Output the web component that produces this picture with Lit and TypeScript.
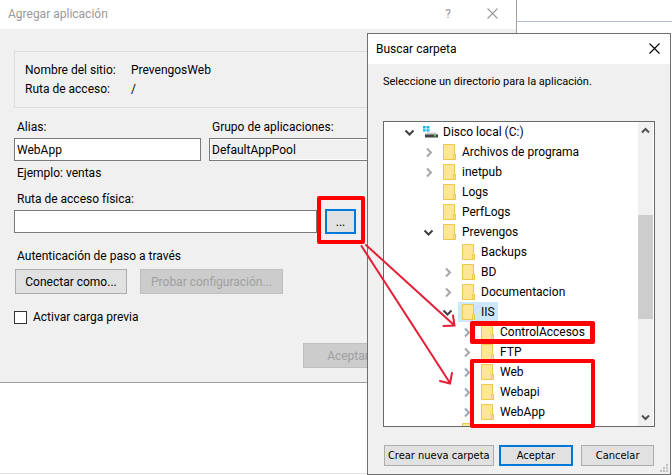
import { LitElement, html, css, svg, nothing } from "lit";
import { customElement, property } from "lit/decorators.js";

interface Node {
  name: string;
  level: number;
  state?: "open" | "closed";
  drive?: boolean;
  selected?: boolean;
}

const before: Node[] = [
  { name: "Disco local (C:)", level: 0, state: "open", drive: true },
  { name: "Archivos de programa", level: 1, state: "closed" },
  { name: "inetpub", level: 1, state: "closed" },
  { name: "Logs", level: 1 },
  { name: "PerfLogs", level: 1 },
  { name: "Prevengos", level: 1, state: "open" },
  { name: "Backups", level: 2 },
  { name: "BD", level: 2, state: "closed" },
  { name: "Documentacion", level: 2, state: "closed" },
  { name: "IIS", level: 2, state: "open", selected: true },
];
const access: Node[] = [{ name: "ControlAccesos", level: 3, state: "closed" }];
const ftp: Node[] = [{ name: "FTP", level: 3, state: "closed" }];
const webs: Node[] = [
  { name: "Web", level: 3, state: "closed" },
  { name: "Webapi", level: 3, state: "closed" },
  { name: "WebApp", level: 3, state: "closed" },
];

const folder = html`<svg class="icon" width="15" height="18" viewBox="0 0 15 18" aria-hidden="true">
  <path d="M1.5 1.5h11v10h1v5h-12z" fill="#ffe694" stroke="#eec84b" />
  <path d="M11.5 16.5v-5h2v5z" fill="#ffe694" stroke="#eec84b" />
</svg>`;

const drive = html`<svg class="icon" width="15" height="18" viewBox="0 0 15 18" aria-hidden="true">
  <path d="M0 3h2.700v2.500H0zM3.500 3h3v2.500h-3zM0 6.200h2.700v2.300H0zM3.500 6.200h3v2.300h-3z" fill="#1db2ea" />
  <path d="M3 9.500h10l2 3H1.500z" fill="#cfcfcf" />
  <path d="M2 11.500h13v3H2z" fill="#424242" />
  <path d="M11 12h2v1.500h-2z" fill="#3fdc4a" />
</svg>`;

const cross = html`<svg width="11" height="11" viewBox="0 0 11 11" aria-hidden="true">
  <path d="M.5 .5l10 10M10.500 .5l-10 10" fill="none" stroke="currentColor" stroke-width="1.1" />
</svg>`;

@customElement("folder-row")
export class FolderRow extends LitElement {
  @property({ attribute: false }) node!: Node;

  static styles = css`
    :host { display: block; }
    .row { display: flex; align-items: center; gap: 3px; height: 20px; }
    .twisty {
      flex: none; width: 15px; height: 20px; padding: 0; border: 0;
      background: none; display: flex; align-items: center; justify-content: center;
    }
    .cell { display: flex; align-items: center; height: 20px; padding: 0 3px; white-space: nowrap; }
    .selected { background: #cce8ff; }
    .icon { flex: none; margin-right: 5px; }
  `;

  render() {
    const n = this.node;
    const open = n.state === "open";
    return html`<div class="row" role="treeitem" aria-level=${n.level + 1} style="padding-left:${18 + n.level * 19}px">
      <button class="twisty" aria-label=${n.state ? n.name : nothing} ?disabled=${!n.state} tabindex="-1">
        ${n.state
          ? html`<svg width="11" height="11" viewBox="0 0 11 11" aria-hidden="true">
              ${open
                ? svg`<path d="M1.500 3.500l4 4 4-4" fill="none" stroke="#404040" stroke-width="2"/>`
                : svg`<path d="M4 1.500l4 4-4 4" fill="none" stroke="#a6a6a6" stroke-width="2"/>`}
            </svg>`
          : nothing}
      </button>
      <span class="cell ${n.selected ? "selected" : ""}">${n.drive ? drive : folder}${n.name}</span>
    </div>`;
  }
}

@customElement("app-root")
export class AppRoot extends LitElement {
  static styles = css`
    :host {
      display: block; position: relative; min-height: 475px; background: #fff; overflow: hidden;
      color: #000; font: 12px/20px Roboto, "Open Sans", sans-serif;
      --red: #ff0000;
    }
    *, *::after { box-sizing: border-box; }
    button, input { font: inherit; color: inherit; margin: 0; }

    .rule-top { height: 22px; border-bottom: 1px solid #aab9da; }
    .rule-bottom { position: absolute; left: 0; right: 0; bottom: 1px; border-bottom: 1px solid #e0e0e0; }

    .window { position: absolute; background: #f0f0f0; }
    .bar { display: flex; align-items: center; background: #fff; }
    .bar h1 { flex: 1; margin: 0; font: inherit; }
    .tool { border: 0; padding: 0; background: none; display: flex; align-items: center; justify-content: center; }

    .add { left: 0; right: 155px; top: 0; border: solid #a0a0a0; border-width: 0 1px 1px 0; }
    .add .bar { height: 29px; padding: 0 18px 2px 8px; color: #999; gap: 36px; }
    .add .content { padding: 22px 14px 14px; }

    .site {
      margin: 0 0 9px; padding: 9px 10px 8px; border: 1px solid #dcdcdc;
      display: grid; grid-template-columns: 106px 1fr; line-height: 19px;
    }
    .site dt, .site dd { margin: 0; }
    .fields { display: grid; grid-template-columns: 187px 1fr; column-gap: 8px; }
    .label { display: block; padding-left: 3px; }
    .field { display: block; width: 100%; height: 23px; padding: 0 2px; border: 1px solid #7a7a7a; background: #fff; border-radius: 0; outline: 0; }
    .fields .field { margin-top: 1px; }
    .locked { background: #f0f0f0; box-shadow: inset 0 0 0 1px #fff; }
    .hint { margin: 2px 0 6px; padding-left: 3px; }
    .path { display: flex; align-items: center; gap: 8px; margin-bottom: 12px; }
    .path .field { flex: 0 1 303px; min-width: 0; }

    .push { height: 25px; padding: 0; border: 1px solid #adadad; background: #e1e1e1; border-radius: 0; white-space: nowrap; }
    .push:disabled { border-color: #bfbfbf; background: #ccc; color: #a0a0a0; }
    .push.focus { border: 2px solid #0078d7; }
    .marked { position: relative; }
    .marked::after { content: ""; position: absolute; border: 4px solid var(--red); border-radius: 2px; pointer-events: none; }
    .browse { width: 31px; }
    .around-button { display: flex; }
    .around-button::after { inset: -13px -9px -10px -8px; }

    .auth { display: flex; gap: 13px; margin-top: 3px; padding-left: 1px; }
    .connect { width: 112px; }
    .test { width: 143px; }
    .preload { display: flex; align-items: center; gap: 6px; margin-top: 13px; }
    .check { appearance: none; width: 13px; height: 13px; border: 1px solid #333; background: #fff; }
    .foot { margin-top: 16px; padding-left: 289px; }
    .foot .push { width: 90px; }

    .find { left: 367px; right: 1px; top: 33px; border: 1px solid #707070; }
    .find .bar { height: 30px; padding: 0 10px 0 8px; }
    .find .bar .tool { padding-bottom: 2px; }
    .find .content { padding: 8px 15px 8px; }
    .prompt { margin: 0 0 29px; font-size: 11px; }
    .small { font: 11px/20px "DejaVu Sans Condensed", "DejaVu Sans", sans-serif; }
    .tree { display: flex; border: 1px solid #696969; background: #fff; }
    .nodes { flex: 1; min-width: 0; }
    .around-one::after { left: 86px; width: 125px; top: -1px; bottom: -2px; border-width: 5px; }
    .around-many::after { left: 86px; width: 125px; top: -3px; bottom: -6px; }
    .peek { height: 4px; overflow: hidden; padding-left: 77px; }
    .peek svg { display: block; }
    .scroll { flex: none; width: 15px; margin-right: 1px; background: #f0f0f0; display: flex; flex-direction: column; justify-content: space-between; color: #505050; }
    .scroll .tool { height: 17px; }
    .track { flex: 1; display: grid; grid-template-rows: 76fr 104fr 90fr; }
    .thumb { grid-row: 2; background: #cdcdcd; }
    .actions { display: flex; margin: 18px 1px 0; }
    .actions .push { height: 21px; line-height: 17px; flex: 73 1 0; min-width: 0; }
    .actions .create { flex: 111 1 0; margin-right: 5px; }
    .actions .cancel { margin-left: 8px; }
    .grip { position: absolute; right: 2px; bottom: 2px; display: block; }

    .arrows { position: absolute; left: 355px; top: 240px; pointer-events: none; }
  `;

  private rows(list: Node[]) {
    return list.map((n) => html`<folder-row .node=${n}></folder-row>`);
  }

  render() {
    return html`
      <div class="rule-top"></div>
      <div class="rule-bottom"></div>

      <section class="window add" aria-label="Agregar aplicación">
        <header class="bar">
          <h1>Agregar aplicación</h1>
          <button class="tool">?</button>
          <button class="tool" aria-label="Cerrar">${cross}</button>
        </header>
        <div class="content">
          <dl class="site">
            <dt>Nombre del sitio:</dt><dd>PrevengosWeb</dd>
            <dt>Ruta de acceso:</dt><dd>/</dd>
          </dl>
          <div class="fields">
            <div>
              <label class="label" for="alias">Alias:</label>
              <input class="field" id="alias" value="WebApp" />
            </div>
            <div>
              <label class="label" for="pool">Grupo de aplicaciones:</label>
              <input class="field locked" id="pool" value="DefaultAppPool" readonly />
            </div>
          </div>
          <p class="hint">Ejemplo: ventas</p>
          <label class="label" for="path">Ruta de acceso física:</label>
          <div class="path">
            <input class="field" id="path" />
            <span class="marked around-button"><button class="push focus browse">...</button></span>
          </div>
          <div class="label">Autenticación de paso a través</div>
          <div class="auth">
            <button class="push connect">Conectar como...</button>
            <button class="push test" disabled>Probar configuración...</button>
          </div>
          <div class="preload">
            <input class="check" type="checkbox" id="preload" />
            <label for="preload">Activar carga previa</label>
          </div>
          <div class="foot"><button class="push" disabled>Aceptar</button></div>
        </div>
      </section>

      <section class="window find" aria-label="Buscar carpeta">
        <header class="bar">
          <h1>Buscar carpeta</h1>
          <button class="tool" aria-label="Cerrar">${cross}</button>
        </header>
        <div class="content">
          <p class="prompt">Seleccione un directorio para la aplicación.</p>
          <div class="tree">
            <div class="nodes" role="tree">
              ${this.rows(before)}
              <div class="marked around-one">${this.rows(access)}</div>
              ${this.rows(ftp)}
              <div class="marked around-many">${this.rows(webs)}</div>
              <div class="peek">${folder}</div>
            </div>
            <div class="scroll">
              <button class="tool" aria-label="Subir">
                <svg width="9" height="7" viewBox="0 0 9 7"><path d="M1 5.500l3.500-3.500 3.500 3.500" fill="none" stroke="currentColor" stroke-width="2" /></svg>
              </button>
              <div class="track"><div class="thumb"></div></div>
              <button class="tool" aria-label="Bajar">
                <svg width="9" height="7" viewBox="0 0 9 7"><path d="M1 1.500l3.500 3.500 3.500-3.500" fill="none" stroke="currentColor" stroke-width="2" /></svg>
              </button>
            </div>
          </div>
          <div class="actions small">
            <button class="push create">Crear nueva carpeta</button>
            <button class="push focus">Aceptar</button>
            <button class="push cancel">Cancelar</button>
          </div>
        </div>
        <svg class="grip" width="8" height="8" viewBox="0 0 8 8" aria-hidden="true">
          <path d="M6 0h2v2h-2zM3 3h2v2h-2zM6 3h2v2h-2zM0 6h2v2h-2zM3 6h2v2h-2zM6 6h2v2h-2z" fill="#bfbfbf" />
        </svg>
      </section>

      <svg class="arrows" width="110" height="150" viewBox="355 240 110 150" fill="none" stroke="#e61e37" stroke-width="2" stroke-linecap="round" aria-hidden="true">
        <path d="M366 245L454 325M453 315.500L454.500 325.500L443.500 326" />
        <path d="M361.500 246L450 383M452 373L450 383.500L440 381" />
      </svg>
    `;
  }
}
